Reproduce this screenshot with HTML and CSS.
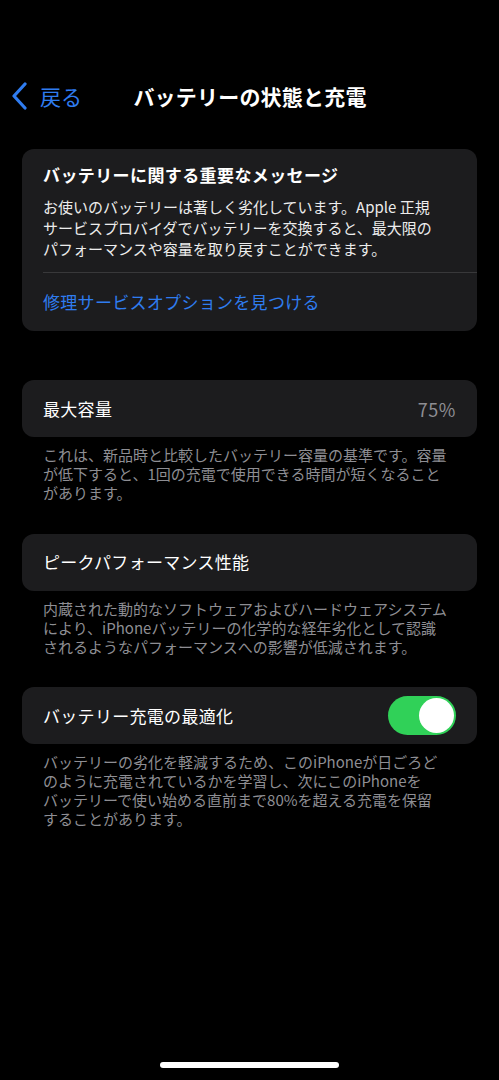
FILE: index.html
```html
<!DOCTYPE html>
<html lang="ja">
<head>
<meta charset="utf-8">
<title>バッテリーの状態と充電</title>
<link rel="stylesheet" href="styles.css">
</head>
<body>
<div class="screen">
  <header class="nav">
    <a class="back">
      <svg class="chev" width="18" height="28" viewBox="0 0 18 28"><path d="M14 2 L3 14 L14 26" fill="none" stroke="#2f7cf0" stroke-width="3.2" stroke-linecap="round" stroke-linejoin="round"/></svg>
      <span class="back-text">戻る</span>
    </a>
    <h1 class="title">バッテリーの状態と充電</h1>
  </header>

  <section class="card msg">
    <h2 class="msg-title">バッテリーに関する重要なメッセージ</h2>
    <p class="msg-body">お使いのバッテリーは著しく劣化しています。Apple 正規<br>サービスプロバイダでバッテリーを交換すると、最大限の<br>パフォーマンスや容量を取り戻すことができます。</p>
    <div class="divider"></div>
    <a class="link">修理サービスオプションを見つける</a>
  </section>

  <section class="group first">
    <div class="card row">
      <span class="label">最大容量</span>
      <span class="value">75%</span>
    </div>
    <p class="foot">これは、新品時と比較したバッテリー容量の基準です。容量<br>が低下すると、1回の充電で使用できる時間が短くなること<br>があります。</p>
  </section>

  <section class="group">
    <div class="card row">
      <span class="label">ピークパフォーマンス性能</span>
    </div>
    <p class="foot">内蔵された動的なソフトウェアおよびハードウェアシステム<br>により、iPhoneバッテリーの化学的な経年劣化として認識<br>されるようなパフォーマンスへの影響が低減されます。</p>
  </section>

  <section class="group">
    <div class="card row">
      <span class="label">バッテリー充電の最適化</span>
      <span class="toggle"><span class="knob"></span></span>
    </div>
    <p class="foot">バッテリーの劣化を軽減するため、このiPhoneが日ごろど<br>のように充電されているかを学習し、次にこのiPhoneを<br>バッテリーで使い始める直前まで80%を超える充電を保留<br>することがあります。</p>
  </section>

  <div class="spacer"></div>
  <div class="home"></div>
</div>
</body>
</html>
```

FILE: styles.css
```css
* { box-sizing: border-box; margin: 0; padding: 0; }
html, body { background: #000; }
body {
  font-family: "Noto Sans CJK JP", "Noto Sans", "Liberation Sans", sans-serif;
  color: #fff;
}
.screen {
  width: 499px;
  height: 1080px;
  display: flex;
  flex-direction: column;
  padding-top: 74px;
}
.nav {
  position: relative;
  height: 44px;
  display: flex;
  align-items: center;
  justify-content: center;
}
.back {
  position: absolute;
  left: 11px;
  top: 0;
  height: 44px;
  display: flex;
  align-items: center;
  gap: 11px;
  color: #2f7cf0;
}
.chev { display: block; }
.back-text { font-size: 21px; line-height: 24px; }
.title {
  font-size: 21px;
  font-weight: 700;
  line-height: 26px;
  letter-spacing: 0.2px;
  margin-left: 1px;
}
.card {
  background: #1c1c1e;
  border-radius: 12px;
  margin: 0 22px;
}
.msg {
  margin-top: 31px;
  padding: 15px 0 18px 21px;
}
.msg-title {
  font-size: 17px;
  font-weight: 700;
  line-height: 22px;
  letter-spacing: 0.4px;
}
.msg-body {
  margin-top: 10px;
  font-size: 15px;
  line-height: 21px;
  color: #ececec;
  padding-right: 16px;
}
.divider {
  height: 1px;
  background: #38383a;
  margin-top: 13px;
}
.link {
  display: block;
  margin-top: 18px;
  font-size: 17px;
  line-height: 22px;
  letter-spacing: 0.3px;
  color: #2f7cf0;
}
.group { margin-top: 31.5px; }
.group.first { margin-top: 49px; }
.row {
  height: 57px;
  display: flex;
  align-items: center;
  justify-content: space-between;
  padding: 0 21px 0 21px;
}
.label { font-size: 17px; line-height: 22px; letter-spacing: 0.3px; }
.value { font-size: 18px; line-height: 22px; color: #8e8e93; letter-spacing: 0.6px; }
.toggle {
  width: 68px;
  height: 39px;
  border-radius: 20px;
  background: #30d158;
  display: flex;
  align-items: center;
  justify-content: flex-end;
  padding-right: 2px;
}
.knob {
  width: 35px;
  height: 35px;
  border-radius: 50%;
  background: #fff;
}
.foot {
  margin-top: 8px;
  padding: 0 21px 0 43px;
  font-size: 15px;
  line-height: 19px;
  color: #8e8e93;
}
.spacer { flex: 1; }
.home {
  width: 179px;
  height: 6px;
  border-radius: 3px;
  background: #fff;
  margin: 0 auto 12px;
}
```
